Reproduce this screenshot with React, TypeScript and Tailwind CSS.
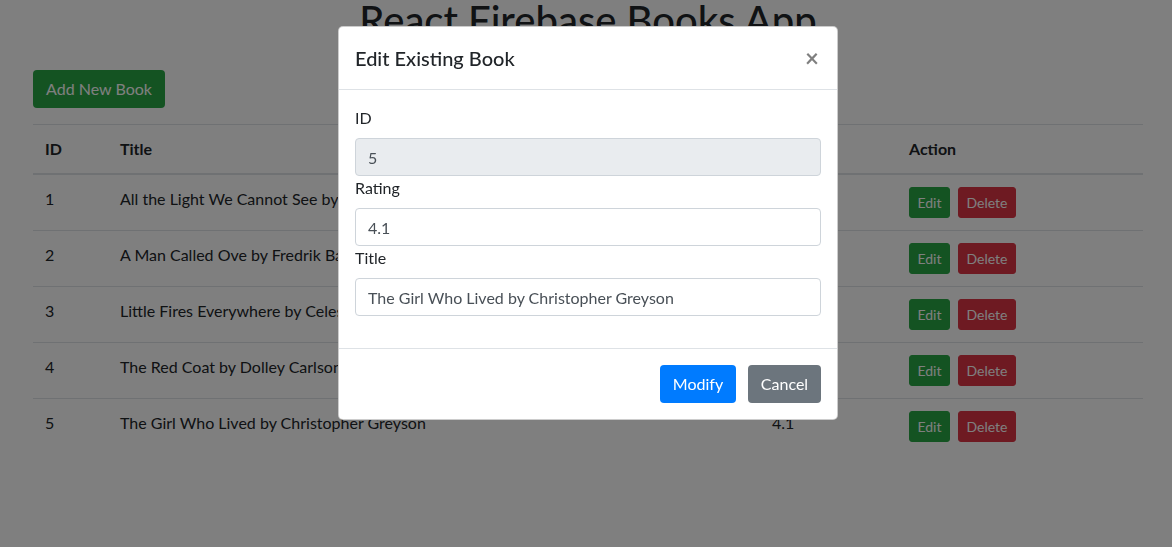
import React, { useState } from "react";

type Book = { id: number; title: string; rating: string };

const books: Book[] = [
    { id: 1, title: "All the Light We Cannot See by Anthony Doerr", rating: "4.6" },
    { id: 2, title: "A Man Called Ove by Fredrik Backman", rating: "4.4" },
    { id: 3, title: "Little Fires Everywhere by Celeste Ng", rating: "4.3" },
    { id: 4, title: "The Red Coat by Dolley Carlson", rating: "4.5" },
    { id: 5, title: "The Girl Who Lived by Christopher Greyson", rating: "4.1" },
];

function BookTable() {
    return (
        <table className="w-full table-fixed border-collapse text-left text-[16px] leading-6 text-[#212529]">
            <colgroup>
                <col className="w-[75px]" />
                <col className="w-[652px]" />
                <col className="w-[137px]" />
                <col className="w-[246px]" />
            </colgroup>
            <thead>
                <tr>
                    <th className="border-t border-b-2 border-[#dee2e6] p-3 font-bold">ID</th>
                    <th className="border-t border-b-2 border-[#dee2e6] p-3 font-bold">Title</th>
                    <th className="border-t border-b-2 border-[#dee2e6] p-3 font-bold">Rating</th>
                    <th className="border-t border-b-2 border-[#dee2e6] p-3 font-bold">Action</th>
                </tr>
            </thead>
            <tbody>
                {books.map((b) => (
                    <tr key={b.id}>
                        <td className="border-t border-[#dee2e6] p-3 align-top">{b.id}</td>
                        <td className="border-t border-[#dee2e6] p-3 align-top">{b.title}</td>
                        <td className="border-t border-[#dee2e6] p-3 align-top">{b.rating}</td>
                        <td className="border-t border-[#dee2e6] p-3 align-top">
                            <div className="flex gap-2">
                                <button className="h-[31px] w-[41px] rounded-[3px] border border-[#28a745] bg-[#28a745] text-[14px] leading-[21px] text-white">Edit</button>
                                <button className="h-[31px] w-[58px] rounded-[3px] border border-[#dc3545] bg-[#dc3545] text-[14px] leading-[21px] text-white">Delete</button>
                            </div>
                        </td>
                    </tr>
                ))}
            </tbody>
        </table>
    );
}

function EditModal() {
    const [rating, setRating] = useState("4.1");
    const [title, setTitle] = useState("The Girl Who Lived by Christopher Greyson");

    const inputCls = "block h-[38px] w-full rounded-[4px] border border-[#ced4da] px-3 text-[16px] leading-6 text-[#495057] outline-none";

    return (
        <div className="fixed left-[338px] top-[26px] z-20 w-[500px] rounded-[5px] border border-black/20 bg-white text-[#212529]">
            <div className="flex items-start justify-between border-b border-[#dee2e6] p-4">
                <h5 className="text-[20px] font-medium leading-[30px]">Edit Existing Book</h5>
                <button className="-my-4 -ml-4 -mr-[14px] p-4 text-[24px] font-bold leading-[30px] text-black/50">×</button>
            </div>
            <div className="p-4 pb-8">
                <label className="mb-2 block leading-6">ID</label>
                <input className={inputCls + " bg-[#e9ecef]"} value="5" disabled readOnly />
                <label className="mb-2 block leading-6">Rating</label>
                <input className={inputCls} value={rating} onChange={(e) => setRating(e.target.value)} />
                <label className="mb-2 block leading-6">Title</label>
                <input className={inputCls} value={title} onChange={(e) => setTitle(e.target.value)} />
            </div>
            <div className="flex justify-end gap-3 border-t border-[#dee2e6] px-4 py-4">
                <button className="h-[38px] w-[76px] rounded-[4px] bg-[#007bff] text-[16px] leading-6 text-white">Modify</button>
                <button className="h-[38px] w-[73px] rounded-[4px] bg-[#6c757d] text-[16px] leading-6 text-white">Cancel</button>
            </div>
        </div>
    );
}

export default function App() {
    return (
        <div className="min-h-screen bg-white font-['Lato',sans-serif]">
            <div className="mx-[33px] w-[1110px]">
                <h1 className="-mt-[4px] text-center text-[40px] font-medium leading-[48px] text-[#212529]">React Firebase Books App</h1>
                <button className="mt-[26px] h-[38px] w-[132px] rounded-[4px] bg-[#28a745] text-[16px] leading-6 text-white">Add New Book</button>
                <div className="mt-4">
                    <BookTable />
                </div>
            </div>
            <div className="fixed inset-0 z-10 bg-black/50" />
            <EditModal />
        </div>
    );
}
